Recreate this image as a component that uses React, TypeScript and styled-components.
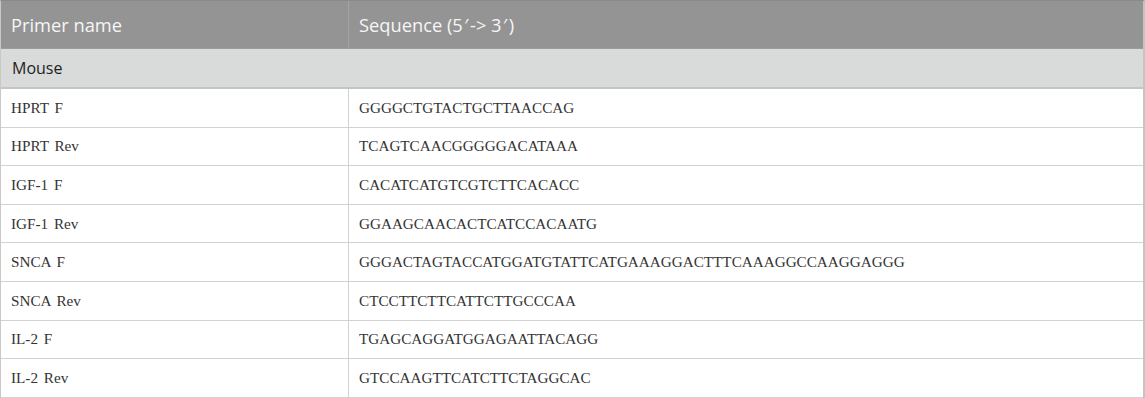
import React from "react";
import styled, { createGlobalStyle } from "styled-components";

const GlobalStyle = createGlobalStyle`
  html, body {
    margin: 0;
    padding: 0;
    background: #fff;
  }
`;

const Table = styled.div`
  width: 1145px;
  box-sizing: border-box;
  border-left: 1px solid #c8c8c8;
  border-right: 2px solid #c4c4c4;
  border-top: 1px solid #8a8a8a;
`;

const HeadRow = styled.div`
  display: grid;
  grid-template-columns: 348px 1fr;
  height: 47px;
  background-color: #949494;
  border-bottom: 1px solid #9c9c9c;
`;

const HeadCell = styled.div<{ $first?: boolean }>`
  display: flex;
  align-items: center;
  padding-left: 10px;
  font-family: "Open Sans", "Noto Sans", sans-serif;
  font-size: 18.3px;
  color: #f6f6f6;
  border-right: ${p => (p.$first ? "1px solid #a4a4a4" : "none")};
`;

const Prime = styled.span`
  margin: 0 1.5px;
`;

const GroupRow = styled.div`
  display: flex;
  align-items: center;
  height: 38px;
  padding-left: 11px;
  background-color: #d9dbda;
  border-bottom: 2px solid #c4c4c4;
  font-family: "Open Sans", "Noto Sans", sans-serif;
  font-size: 16px;
  color: #222;
`;

const Row = styled.div`
  display: grid;
  grid-template-columns: 348px 1fr;
  height: 37.6px;
  border-bottom: 1px solid #d2d2d2;
`;

const Cell = styled.div<{ $first?: boolean }>`
  display: flex;
  align-items: center;
  padding-left: 10px;
  font-family: "Liberation Serif", "Times New Roman", serif;
  font-size: 15.2px;
  color: #333;
  word-spacing: 2px;
  border-right: ${p => (p.$first ? "1px solid #d2d2d2" : "none")};
`;

const primers = [
  ["HPRT F", "GGGGCTGTACTGCTTAACCAG"],
  ["HPRT Rev", "TCAGTCAACGGGGGACATAAA"],
  ["IGF-1 F", "CACATCATGTCGTCTTCACACC"],
  ["IGF-1 Rev", "GGAAGCAACACTCATCCACAATG"],
  ["SNCA F", "GGGACTAGTACCATGGATGTATTCATGAAAGGACTTTCAAAGGCCAAGGAGGG"],
  ["SNCA Rev", "CTCCTTCTTCATTCTTGCCCAA"],
  ["IL-2 F", "TGAGCAGGATGGAGAATTACAGG"],
  ["IL-2 Rev", "GTCCAAGTTCATCTTCTAGGCAC"],
];

export default function App() {
  return (
    <>
      <GlobalStyle />
      <Table>
        <HeadRow>
          <HeadCell $first>Primer name</HeadCell>
          <HeadCell>
            Sequence (5<Prime>′</Prime>-&gt; 3<Prime>′</Prime>)
          </HeadCell>
        </HeadRow>
        <GroupRow>Mouse</GroupRow>
        {primers.map(([name, seq]) => (
          <Row key={name}>
            <Cell $first>{name}</Cell>
            <Cell>{seq}</Cell>
          </Row>
        ))}
      </Table>
    </>
  );
}
